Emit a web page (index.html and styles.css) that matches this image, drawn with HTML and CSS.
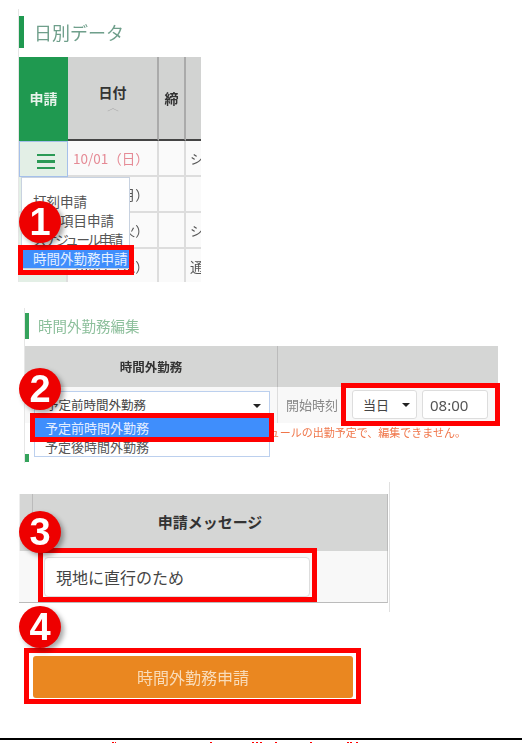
FILE: index.html
```html
<!DOCTYPE html>
<html lang="ja">
<head>
  <meta charset="UTF-8">
  <meta name="viewport" content="width=device-width, initial-scale=1.0">
  <title>時間外勤務申請</title>
  <link rel="stylesheet" href="styles.css">
</head>
<body>
  <div class="page">
    <section class="daily">
      <h2 class="title title-daily">日別データ</h2>
      <table class="daily-table">
        <thead>
          <tr>
            <th class="apply-head">申請</th>
            <th class="date-head">日付<span class="sort"></span></th>
            <th>締</th>
            <th></th>
          </tr>
        </thead>
        <tbody>
          <tr>
            <td class="apply-cell focused">
              <span class="burger"><i></i><i></i><i></i></span>
            </td>
            <td class="date sunday">10/01（日）</td>
            <td></td>
            <td>シ</td>
          </tr>
          <tr>
            <td class="apply-cell"></td>
            <td class="date">10/02（月）</td>
            <td></td>
            <td></td>
          </tr>
          <tr>
            <td class="apply-cell"></td>
            <td class="date">10/03（火）</td>
            <td></td>
            <td>シ</td>
          </tr>
          <tr>
            <td class="apply-cell"></td>
            <td class="date">10/04（水）</td>
            <td></td>
            <td>通</td>
          </tr>
        </tbody>
      </table>
      <ul class="menu">
        <li>打刻申請</li>
        <li>勤務項目申請</li>
        <li class="tight">スケジュール申請</li>
        <li class="active">時間外勤務申請</li>
      </ul>
    </section>

    <section class="edit">
      <h2 class="title title-edit">時間外勤務編集</h2>
      <div class="edit-table">
        <div class="edit-head">時間外勤務</div>
        <div class="edit-head"></div>
        <div class="edit-cell">
          <div class="fake-select wide">予定前時間外勤務<span class="caret"></span></div>
        </div>
        <div class="edit-cell time-cell">
          <span class="time-label">開始時刻：</span>
          <div class="fake-select day">当日<span class="caret"></span></div>
          <input class="time-input" type="text" value="08:00">
        </div>
      </div>
      <p class="edit-error">スケジュールの出勤予定で、編集できません。</p>
      <ul class="options">
        <li class="active">予定前時間外勤務</li>
        <li>予定後時間外勤務</li>
      </ul>
      <div class="next-title"><span></span></div>
    </section>

    <section class="request">
      <div class="request-head"><span></span><strong>申請メッセージ</strong></div>
      <div class="request-row">
        <input class="message-input" type="text" value="現地に直行のため">
      </div>
    </section>

    <div class="submit-row">
      <button class="submit" type="button">時間外勤務申請</button>
    </div>

    <div class="next-page">
      <svg width="522" height="3" viewBox="0 0 522 3">
        <g fill="#f00">
          <rect x="112" y="0" width="2" height="3"/>
          <rect x="115" y="0" width="1" height="2"/>
          <rect x="210" y="0" width="2" height="3"/>
          <rect x="252" y="0" width="2" height="3"/>
          <rect x="256" y="0" width="2" height="3"/>
          <rect x="260" y="0" width="2" height="3"/>
          <rect x="275" y="0" width="2" height="2"/>
          <rect x="310" y="0" width="2" height="3"/>
          <rect x="347" y="0" width="2" height="2"/>
          <rect x="350" y="0" width="2" height="3"/>
          <rect x="356" y="0" width="2" height="3"/>
        </g>
      </svg>
    </div>

    <!-- callouts laid over the screenshots -->
    <div class="frame frame-menu"></div>
    <div class="frame frame-option"></div>
    <div class="frame frame-time"></div>
    <div class="frame frame-message"></div>
    <div class="frame frame-submit"></div>
    <div class="badge badge-1">1</div>
    <div class="badge badge-2">2</div>
    <div class="badge badge-3">3</div>
    <div class="badge badge-4">4</div>
  </div>
</body>
</html>
```

FILE: styles.css
```css
* {
  box-sizing: border-box;
}
html, body {
  margin: 0;
  padding: 0;
  background: #fff;
}
body {
  font-family: "Noto Sans CJK JP", "Noto Sans", sans-serif;
  color: #444;
}
.page {
  position: relative;
  width: 522px;
  height: 743px;
  overflow: hidden;
  filter: blur(0.35px);
}

/* section titles */
.title {
  margin: 0;
  font-weight: 400;
  white-space: nowrap;
}
.title-daily {
  height: 32px;
  margin-top: 7px;
  padding-left: 10px;
  border-left: 5px solid #1f9950;
  font-size: 18px;
  line-height: 32px;
  color: #6f9f8b;
}
.title-edit {
  height: 26px;
  margin-top: 5px;
  padding-left: 9px;
  border-left: 4px solid #35a35c;
  font-size: 14.5px;
  line-height: 26px;
  color: #8cbf9b;
}

/* daily table */
.daily {
  position: relative;
  width: 183px;
  height: 273px;
  margin: 9px 0 0 18px;
  border-left: 1px solid #e6e6e6;
  overflow: hidden;
}
.daily-table {
  width: 182px;
  margin-top: 9px;
  border-collapse: separate;
  border-spacing: 0;
  table-layout: fixed;
  font-size: 13.5px;
}
.daily-table th {
  height: 84px;
  padding: 0;
  background: #d2d3d2;
  border-right: 2px solid #aaa;
  border-bottom: 2px solid #444;
  color: #333;
  font-size: 14px;
  font-weight: 700;
}
.daily-table th:nth-child(1) {
  width: 49px;
}
.daily-table th:nth-child(2) {
  width: 91px;
}
.daily-table th:nth-child(3) {
  width: 27px;
}
.daily-table th:last-child {
  border-right: 0;
}
.daily-table .apply-head {
  background: #1f9950;
  border-right: 0;
  border-bottom-color: #1f9950;
  color: #e6f3ea;
}
.date-head {
  position: relative;
}
.sort {
  display: block;
  width: 8px;
  height: 8px;
  margin: 5px auto 0;
  border-top: 1px solid #aaa;
  border-left: 1px solid #aaa;
  transform: scaleY(0.5) rotate(45deg);
}
.daily-table td {
  height: 36px;
  padding: 0 0 0 4px;
  background: #fafafa;
  border-right: 2px solid #ddd;
  border-bottom: 2px solid #ddd;
  color: #555;
  white-space: nowrap;
  overflow: hidden;
}
.daily-table td:last-child {
  border-right: 0;
}
.daily-table .apply-cell {
  background: #e3efe6;
  text-align: center;
}
.daily-table .date {
  padding-left: 5px;
}
.daily-table .sunday {
  color: #e58a95;
}
.daily-table .focused {
  border: 1px solid #a5c0ea;
}
.burger {
  display: inline-flex;
  flex-direction: column;
  gap: 4px;
  width: 18px;
  vertical-align: middle;
}
.burger i {
  height: 2.5px;
  background: #2a9a55;
}
.menu {
  position: absolute;
  top: 168px;
  left: 2px;
  width: 109px;
  margin: 0;
  padding: 14px 0 0;
  list-style: none;
  background: #fff;
  border: 1px solid #c8d2e0;
  font-size: 13.5px;
  line-height: 19px;
  color: #555;
}
.menu li {
  padding-left: 11px;
  white-space: nowrap;
}
.menu .tight {
  letter-spacing: -2.4px;
}
.menu .active {
  background: #3f8efc;
  color: #e4efff;
}

/* overtime edit panel */
.edit {
  position: relative;
  width: 474px;
  height: 155px;
  margin: 26px 0 0 24px;
  border-left: 1px solid #e6e6e6;
  overflow: hidden;
}
.edit-table {
  display: grid;
  grid-template-columns: 252px 221px;
  grid-template-rows: 41px 36px;
  margin-top: 7px;
}
.edit-head {
  display: flex;
  align-items: center;
  justify-content: center;
  background: #d5d6d5;
  font-size: 12.5px;
  font-weight: 700;
  color: #333;
}
.edit-head + .edit-head {
  border-left: 1px solid #bbb;
}
.edit-cell {
  padding: 4px 0 0 9px;
  background: #f8f8f8;
}
.fake-select {
  position: relative;
  background: #fff;
  font-size: 12.5px;
}
.fake-select.wide {
  width: 236px;
  height: 30px;
  padding-left: 11px;
  border: 1px solid #bcd0ee;
  line-height: 26px;
}
.caret {
  position: absolute;
  top: 50%;
  right: 8px;
  margin-top: -2px;
  border-top: 4px solid #222;
  border-left: 4px solid transparent;
  border-right: 4px solid transparent;
}
.fake-select.day .caret {
  right: 6px;
}
.time-cell {
  display: flex;
  align-items: flex-start;
  gap: 5px;
  padding-top: 3px;
  padding-left: 8px;
  border-left: 1px solid #ddd;
}
.time-label {
  width: 61px;
  flex: none;
  overflow: hidden;
  white-space: nowrap;
  font-size: 13px;
  line-height: 30px;
  color: #888;
}
.fake-select.day {
  flex: none;
  width: 65px;
  height: 29px;
  padding-left: 10px;
  border: 1px solid #ddd;
  border-radius: 3px;
  font-size: 13px;
  line-height: 27px;
}
.time-input {
  width: 66px;
  height: 29px;
  padding: 0 7px;
  border: 1px solid #ddd;
  border-radius: 3px;
  background: #fff;
  font: 15px "Noto Sans", sans-serif;
  color: #555;
}
.edit-error {
  width: 441px;
  margin: 1px 0 0;
  font-size: 11px;
  line-height: 16px;
  text-align: right;
  white-space: nowrap;
  color: #f0764a;
}
.options {
  position: absolute;
  top: 110px;
  left: 9px;
  width: 236px;
  margin: 0;
  padding: 0;
  list-style: none;
  background: #fff;
  border: 1px solid #bcd0ee;
  border-top: 0;
  font-size: 13px;
  line-height: 19px;
  color: #555;
}
.options li {
  padding-left: 10px;
}
.options .active {
  background: #3f8efc;
  color: #e4efff;
}
.next-title {
  margin-top: 14px;
  height: 8px;
  border-left: 4px solid #35a35c;
}
.next-title span {
  display: block;
  width: 80px;
  height: 1px;
  margin: 7px 0 0 24px;
  border-top: 1px dotted #a8d3b5;
}

/* message */
.request {
  width: 371px;
  height: 130px;
  margin: 19px 0 0 19px;
  padding-top: 12px;
  background: linear-gradient(#e0e0e0, #e0e0e0) no-repeat right top / 1px 100%;
}
.request-head {
  display: flex;
  width: 369px;
  height: 57px;
  background: #d5d6d5;
  border-left: 1px solid #eee;
  border-right: 1px solid #bbb;
}
.request-head span {
  width: 13px;
  flex: none;
  border-right: 1px solid #bbb;
}
.request-head strong {
  flex: 1;
  font-size: 15px;
  line-height: 55px;
  text-align: center;
  color: #333;
}
.request-row {
  width: 369px;
  height: 52px;
  padding: 6px 0 0 25px;
  background: #f8f8f8;
  border-right: 1px solid #ccc;
  border-bottom: 1px solid #bbb;
}
.message-input {
  width: 266px;
  height: 40px;
  padding: 0 11px;
  border: 1px solid #ddd;
  border-radius: 4px;
  background: #fff;
  font: 16px "Noto Sans CJK JP", sans-serif;
  color: #444;
}

/* submit */
.submit-row {
  margin: 44px 0 0 33px;
}
.submit {
  display: block;
  width: 320px;
  height: 42px;
  padding: 0;
  border: 0;
  border-radius: 3px;
  background: #ea8720;
  font: 16px "Noto Sans CJK JP", sans-serif;
  color: #f9dcb9;
  cursor: pointer;
}
.next-page {
  height: 5px;
  margin-top: 40px;
  padding-top: 2px;
  border-top: 2px solid #000;
  overflow: hidden;
}
.next-page svg {
  display: block;
}

/* red frames and numbered badges */
.frame {
  position: absolute;
  border: 5px solid #f00;
}
.frame-menu {
  left: 18px;
  top: 245px;
  width: 116px;
  height: 30px;
}
.frame-option {
  left: 30px;
  top: 413px;
  width: 244px;
  height: 29px;
}
.frame-time {
  left: 341px;
  top: 383px;
  width: 159px;
  height: 43px;
}
.frame-message {
  left: 38px;
  top: 548px;
  width: 279px;
  height: 54px;
}
.frame-submit {
  left: 24px;
  top: 648px;
  width: 337px;
  height: 56px;
}
.badge {
  position: absolute;
  left: 19px;
  width: 42px;
  height: 42px;
  border-radius: 50%;
  background: #ee0000;
  box-shadow: 3px 3px 5px rgba(0, 0, 0, 0.35);
  font: 700 38px/42px "Liberation Sans", Arial, sans-serif;
  text-align: center;
  color: #fff;
}
.badge-1 {
  top: 201px;
}
.badge-2 {
  top: 368px;
}
.badge-3 {
  top: 511px;
}
.badge-4 {
  top: 606px;
}
```
